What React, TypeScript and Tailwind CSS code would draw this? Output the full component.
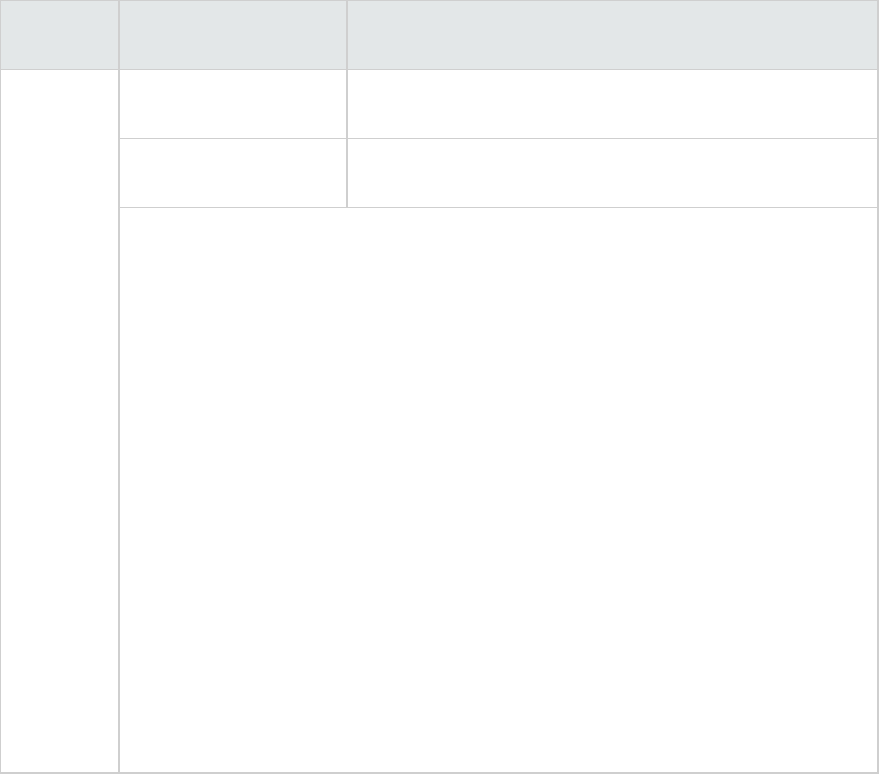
import React from 'react';

const line = 'border-[#cfcfcf]';
const head = 'bg-[#e3e7e8]';

export default function App() {
	return (
		<div className="h-[774px] w-[879px] bg-white font-['Liberation_Sans',sans-serif]">
			<div className={`grid h-full w-full grid-cols-[119px_228px_531px] grid-rows-[69px_69px_69px_566px] border-l border-t ${line}`}>
				<div className={`${head} border-r-2 border-b ${line}`} />
				<div className={`${head} border-r-2 border-b ${line}`} />
				<div className={`${head} border-r-2 border-b ${line}`} />

				<div className={`row-span-3 border-r-2 border-b-2 ${line}`} />
				<div className={`border-r-2 border-b ${line}`} />
				<div className={`border-r-2 border-b ${line}`} />

				<div className={`border-r-2 border-b ${line}`} />
				<div className={`border-r-2 border-b ${line}`} />

				<div className={`col-span-2 border-r-2 border-b-2 ${line}`} />
			</div>
		</div>
	);
}
